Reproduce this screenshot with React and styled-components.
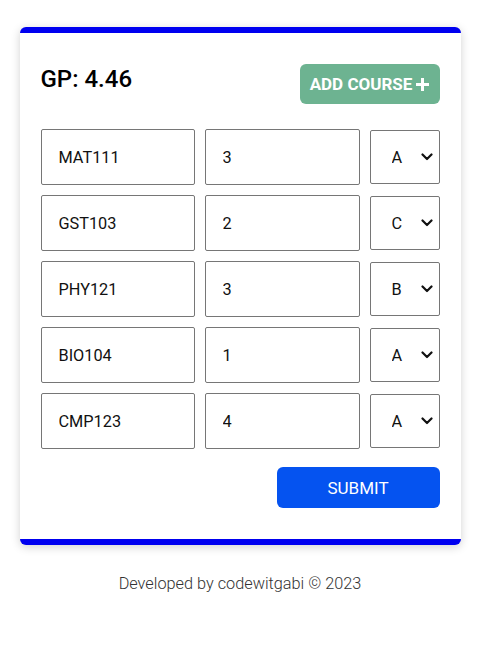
import React from "react";
import styled, { createGlobalStyle } from "styled-components";

const Global = createGlobalStyle`
  body { margin: 0; background: #fff; font-family: Roboto, "Liberation Sans", sans-serif; }
  * { box-sizing: border-box; }
`;

const chevron =
  "data:image/svg+xml;utf8," +
  encodeURIComponent(
    '<svg xmlns="http://www.w3.org/2000/svg" width="12" height="8" viewBox="0 0 12 8"><path d="M1.5 1.5L6 6l4.5-4.5" fill="none" stroke="#111" stroke-width="2.2" stroke-linecap="round" stroke-linejoin="round"/></svg>'
  );

const Card = styled.div`
  width: 441px;
  margin: 27px auto 0;
  background: #fff;
  border-top: 6px solid #0000f0;
  border-bottom: 6px solid #0000f0;
  border-radius: 6px;
  box-shadow: 0 2px 10px rgba(0,0,0,0.18);
  padding: 31px 21px 31px 21px;
`;

const Header = styled.div`
  display: flex;
  justify-content: space-between;
  align-items: center;
  height: 40px;
  margin-bottom: 25px;
`;

const GP = styled.h2`
  margin: 0;
  font-size: 24px;
  font-weight: 500;
  color: #000;
  position: relative;
  top: -5px;
`;

const AddButton = styled.button`
  height: 40px;
  width: 140px;
  border: none;
  border-radius: 6px;
  background: #6db391;
  color: #fff;
  font-family: Roboto, sans-serif;
  font-weight: 700;
  font-size: 17px;
  display: flex;
  align-items: center;
  justify-content: center;
  gap: 4px;
  padding: 0;
`;

const Rows = styled.div`
  display: flex;
  flex-direction: column;
  gap: 10px;
`;

const Row = styled.div`
  display: grid;
  grid-template-columns: 154px 155px 70px;
  gap: 10px;
  align-items: center;
`;

const Input = styled.input`
  height: 56px;
  width: 100%;
  border: 1px solid #767676;
  border-radius: 2px;
  padding: 0 0 0 17px;
  font-family: Roboto, sans-serif;
  font-size: 16.3px;
  color: #111;
  outline: none;
`;

const Select = styled.select`
  appearance: none;
  -webkit-appearance: none;
  height: 54px;
  width: 100%;
  border: 1px solid #767676;
  border-radius: 2px;
  padding: 0 0 0 21px;
  font-family: Roboto, sans-serif;
  font-size: 16.3px;
  color: #111;
  background: #fff url("${chevron}") no-repeat right 6px center / 12px 8px;
`;

const Actions = styled.div`
  display: flex;
  justify-content: flex-end;
  margin-top: 18px;
`;

const Submit = styled.button`
  width: 163px;
  height: 41px;
  border: none;
  border-radius: 6px;
  background: #0553f0;
  color: #fff;
  font-family: Roboto, sans-serif;
  font-size: 17px;
  font-weight: 400;
`;

const Footer = styled.p`
  text-align: center;
  margin: 29px 0 0;
  font-size: 16.3px;
  font-weight: 300;
  color: #333;
`;

const courses = [
  ["MAT111", "3", "A"],
  ["GST103", "2", "C"],
  ["PHY121", "3", "B"],
  ["BIO104", "1", "A"],
  ["CMP123", "4", "A"],
];

const Plus = () => (
  <svg width="13" height="13" viewBox="0 0 13 13">
    <path d="M5 0h3v5h5v3H8v5H5V8H0V5h5z" fill="#fff" />
  </svg>
);

export default function App() {
  return (
    <>
      <Global />
      <Card>
        <Header>
          <GP>GP: 4.46</GP>
          <AddButton>ADD COURSE <Plus /></AddButton>
        </Header>
        <Rows>
          {courses.map(([c, u, g]) => (
            <Row key={c}>
              <Input defaultValue={c} />
              <Input defaultValue={u} />
              <Select defaultValue={g}>
                {["A", "B", "C", "D", "E", "F"].map((x) => (
                  <option key={x}>{x}</option>
                ))}
              </Select>
            </Row>
          ))}
        </Rows>
        <Actions>
          <Submit>SUBMIT</Submit>
        </Actions>
      </Card>
      <Footer>Developed by codewitgabi © 2023</Footer>
    </>
  );
}
